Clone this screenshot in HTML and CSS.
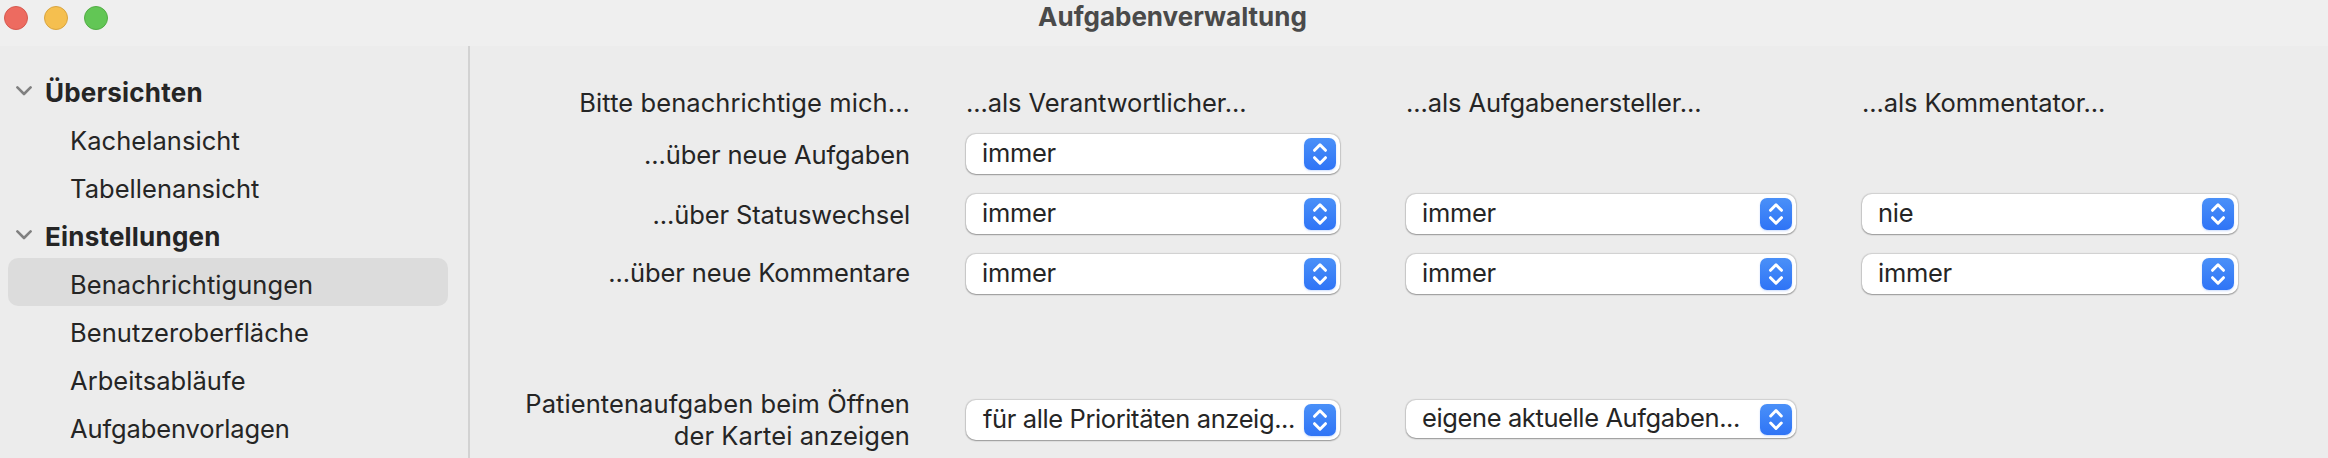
FILE: index.html
```html
<!DOCTYPE html>
<html lang="de">
<head>
  <meta charset="UTF-8">
  <title>Aufgabenverwaltung</title>
  <link rel="stylesheet" href="styles.css">
</head>
<body>

  <svg width="0" height="0" class="defs">
    <symbol id="updown" viewBox="0 0 32 32">
      <path d="M10.5 12.3 L16 6.8 L21.5 12.3 M10.5 19.7 L16 25.2 L21.5 19.7"/>
    </symbol>
    <symbol id="chevron" viewBox="0 0 16 10">
      <path d="M1.4 1.4 L8 8 L14.6 1.4"/>
    </symbol>
  </svg>

  <header class="titlebar">
    <div class="lights">
      <span class="light red"></span>
      <span class="light yellow"></span>
      <span class="light green"></span>
    </div>
    <h1>Aufgabenverwaltung</h1>
  </header>

  <div class="window">
    <nav class="sidebar">
      <div class="group"><svg class="chevron"><use href="#chevron"/></svg>Übersichten</div>
      <div class="item">Kachelansicht</div>
      <div class="item">Tabellenansicht</div>
      <div class="group"><svg class="chevron"><use href="#chevron"/></svg>Einstellungen</div>
      <div class="item active">Benachrichtigungen</div>
      <div class="item">Benutzeroberfläche</div>
      <div class="item">Arbeitsabläufe</div>
      <div class="item tight">Aufgabenvorlagen</div>
    </nav>

    <main class="settings">
      <div class="label head">Bitte benachrichtige mich...</div>
      <div class="head col">...als Verantwortlicher...</div>
      <div class="head col">...als Aufgabenersteller...</div>
      <div class="head col">...als Kommentator...</div>

      <div class="label row">...über neue Aufgaben</div>
      <div class="select"><span>immer</span><svg class="arrows"><use href="#updown"/></svg></div>
      <div></div>
      <div></div>

      <div class="label row">...über Statuswechsel</div>
      <div class="select"><span>immer</span><svg class="arrows"><use href="#updown"/></svg></div>
      <div class="select"><span>immer</span><svg class="arrows"><use href="#updown"/></svg></div>
      <div class="select"><span>nie</span><svg class="arrows"><use href="#updown"/></svg></div>

      <div class="label row last">...über neue Kommentare</div>
      <div class="select"><span>immer</span><svg class="arrows"><use href="#updown"/></svg></div>
      <div class="select"><span>immer</span><svg class="arrows"><use href="#updown"/></svg></div>
      <div class="select"><span>immer</span><svg class="arrows"><use href="#updown"/></svg></div>

      <div class="label patient">Patientenaufgaben beim Öffnen<br>der Kartei anzeigen</div>
      <div class="select long"><span>für alle Prioritäten anzeig...</span><svg class="arrows"><use href="#updown"/></svg></div>
      <div class="select long short"><span>eigene aktuelle Aufgaben...</span><svg class="arrows"><use href="#updown"/></svg></div>
      <div></div>
    </main>
  </div>

</body>
</html>
```
FILE: styles.css
```css
* {
  box-sizing: border-box;
}

body {
  margin: 0;
  height: 458px;
  overflow: hidden;
  background-color: #ececec;
  color: #252525;
  font-family: Inter, "Liberation Sans", sans-serif;
  font-size: 25.5px;
  white-space: nowrap;
}

.defs {
  display: block;
}

/* title bar */
.titlebar {
  display: grid;
  grid-template-columns: 1fr auto 1fr;
  height: 46px;
  background-color: #efefef;
}

.lights {
  display: flex;
  gap: 16px;
  padding: 6px 0 0 4px;
}

.light {
  width: 24px;
  height: 24px;
  border-radius: 50%;
  border: 1px solid;
}

.red {
  background-color: #ed6b60;
  border-color: #d65a50;
}

.yellow {
  background-color: #f5bf4f;
  border-color: #d9a540;
}

.green {
  background-color: #62c655;
  border-color: #52ad45;
}

h1 {
  margin: 0 0 0 17px;
  font-size: 26px;
  line-height: 33px;
  font-weight: 700;
  color: #4a4a4a;
}

.window {
  display: flex;
  height: 412px;
}

/* sidebar */
.sidebar {
  width: 470px;
  padding: 20px 20px 0 8px;
  border-right: 2px solid #d2d2d2;
  line-height: 53px;
}

.group,
.item {
  height: 48px;
}

.group {
  display: flex;
  padding-left: 8px;
  font-size: 26px;
  font-weight: 700;
  letter-spacing: 0.21px;
}

.chevron {
  width: 16px;
  height: 10px;
  margin: 20px 13px 0 0;
  fill: none;
  stroke: #808080;
  stroke-width: 2.6;
  stroke-linecap: round;
  stroke-linejoin: round;
}

.item {
  padding-left: 62px;
  letter-spacing: 0.05px;
}

.item.tight {
  letter-spacing: -0.12px;
}

.active {
  background-color: #dcdcdc;
  border-radius: 10px;
}

/* settings */
.settings {
  display: grid;
  grid-template-columns: 439px 374px 390px 376px;
  grid-template-rows: 48px 60px 60px 134px 70px;
  column-gap: 66px;
  align-items: start;
  padding-top: 40px;
  margin-left: -9px;
}

.label {
  text-align: right;
  margin-right: -10px;
  letter-spacing: -0.11px;
}

.head {
  line-height: 33px;
}

.label.head,
.label.patient {
  letter-spacing: 0.08px;
}

.col {
  letter-spacing: -0.1px;
}

.row {
  line-height: 41px;
}

.last {
  line-height: 37px;
}

.patient {
  line-height: 32px;
}

.select {
  display: flex;
  justify-content: space-between;
  height: 40px;
  padding: 0 4px 0 16px;
  background-color: #fff;
  border-radius: 10px;
  box-shadow: 0 0 1px 0.5px rgba(0, 0, 0, 0.12), 0 1px 1.5px rgba(0, 0, 0, 0.28);
  line-height: 37px;
  letter-spacing: -0.3px;
}

.long {
  margin-top: 12px;
  padding-left: 17px;
  letter-spacing: -0.39px;
}

.short {
  height: 38px;
  padding-left: 16px;
  line-height: 36px;
}

.arrows {
  width: 32px;
  height: 32px;
  margin-top: 4px;
  border-radius: 7px;
  background: linear-gradient(#4a90f8, #2f74f6);
  box-shadow: 0 1px 2px rgba(47, 116, 246, 0.25);
  fill: none;
  stroke: #fff;
  stroke-width: 3;
  stroke-linecap: round;
  stroke-linejoin: round;
}

.short .arrows {
  height: 31px;
}
```
